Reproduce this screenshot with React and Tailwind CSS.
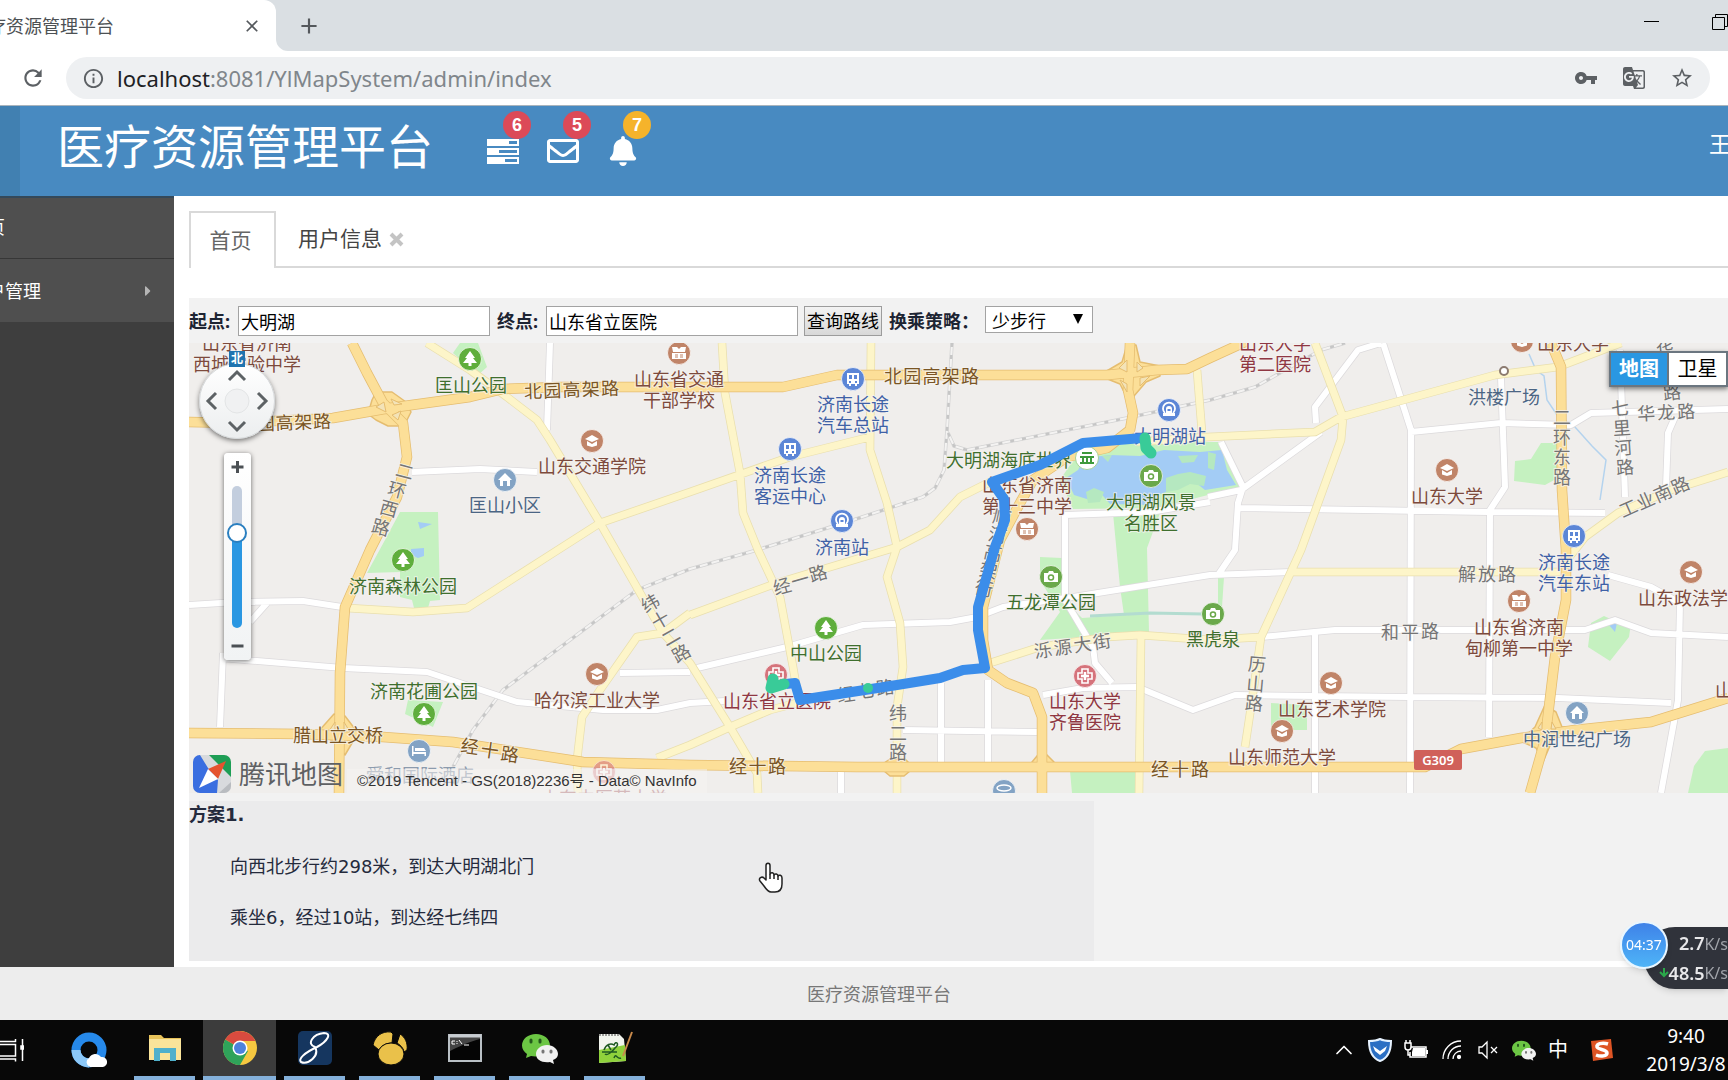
import React from 'react';
import { FaRegEnvelope, FaBell, FaCaretRight } from 'react-icons/fa';
import { MdVpnKey, MdGTranslate, MdStarBorder, MdRefresh, MdInfoOutline, MdClose, MdAdd } from 'react-icons/md';
import { ChevronUp } from 'lucide-react';

const GREENS = [
    '367,573 385,540 400,512 438,512 440,600 430,601 428,608 414,608 412,600 400,597 400,572',
    '460,343 478,343 487,367 478,375 453,353',
    '408,700 443,702 433,727 405,714',
    '1090,450 1137,442 1218,442 1243,488 1208,495 1157,508 1073,509 1060,480 1072,462',
    '1113,513 1160,513 1147,548 1149,632 1100,636 1040,640 1060,612 1040,580 1040,557 1062,558 1064,600 1082,618 1124,615 1120,587',
    '1515,461 1531,459 1541,443 1558,443 1558,478 1545,485 1514,481',
    '1591,623 1604,616 1615,621 1631,623 1629,637 1610,661 1588,647',
    '1271,703 1307,705 1307,730 1271,730',
    '1705,751 1728,748 1728,793 1688,793 1694,766',
    '1070,771 1139,771 1139,793 1072,793',
    '1218,577 1224,577 1222,607 1218,604',
];

const LAKES = [
    '1085,458 1110,455 1140,456 1164,450 1200,452 1222,450 1227,470 1236,485 1205,490 1195,482 1160,494 1150,505 1110,504 1098,490 1090,500 1074,495 1066,478 1078,470',
    '418,522 432,524 420,529',
    '411,549 424,548 424,556 418,558 411,555',
    '1609,625 1617,623 1615,632',
];

const ISLANDS = [
    '1086,492 1094,488 1104,492 1100,502 1088,503',
    '1166,478 1178,474 1190,472 1206,476 1204,486 1190,484 1178,490 1166,492',
    '1178,456 1198,455 1194,462 1182,463',
    '1208,452 1216,454 1214,470 1208,468',
    '1102,456 1112,455 1108,462',
];

const WHITE_ROADS = [
    'M550 343L547 430', 'M412 472L480 469L537 472', 'M189 605L237 602L303 601L342 607', 'M220 658L343 668L427 672L517 702L603 710L657 710L690 703L725 701',
    'M223 653L220 727', 'M267 603L250 622', 'M697 668L787 647L863 625L950 622L977 617L1003 607L1073 597L1210 575L1291 572', 'M620 673L690 672',
    'M941 683V763', 'M988 680V763', 'M903 730L1037 732', 'M1210 502L1150 512L1065 515L1065 600L1093 647L1095 663L1112 683',
    'M1043 695L1083 688L1137 687L1193 710L1235 695L1408 697L1558 698L1671 703', 'M1208 497L1241 490L1321 432', 'M1221 442L1243 487L1238 503L1235 550L1218 575',
    'M1238 508L1488 512L1605 513', 'M1383 343L1411 430L1410 793', 'M1411 432L1501 423L1571 425L1591 413L1728 409', 'M1501 377L1505 487L1490 510L1489 737',
    'M1316 423L1315 407L1358 350L1381 343', 'M1666 487L1668 433L1675 417', 'M1620 350L1625 497', 'M1261 637L1335 630L1585 630L1615 620L1651 633L1728 637',
    'M1608 575L1651 587L1680 603L1678 700L1661 793', 'M1315 632V793', 'M841 770V793',
];

const YELLOW_ROADS = [
    'M427 343L470 370L507 397L537 420L550 440L600 523L663 633L690 663L730 727L757 773L758 793', 'M347 608L413 612L467 608L600 523L690 492L790 457L870 437',
    'M722 343L725 393L740 473L743 513L758 550L780 597L793 667L797 690', 'M871 343L870 450L887 503L897 547L887 577L900 623L903 667L897 707V793',
    'M690 615L777 583L897 547L930 530L960 497L990 482', 'M657 758L690 745L730 727L770 710L797 703', 'M578 793L577 760L582 717L600 690L637 637L663 633L690 613',
    'M990 663L1040 647L1107 637L1140 635L1210 640L1261 637', 'M1141 637L1139 793', 'M1315 343L1343 417L1341 440L1301 550L1261 637L1251 707L1245 747',
    'M1137 442L1208 437L1315 432L1341 417L1495 375L1558 367L1621 343', 'M1197 370L1202 433', 'M1291 572H1560', 'M1570 556L1585 537L1618 513L1671 490L1728 472',
];

const MAIN_ROADS = [
    'M189 422L237 423L333 418L390 408L470 397L503 389L560 387H783L837 375H1107L1157 370L1187 369L1210 358L1245 342',
    'M352 343L367 373L383 403L403 423L407 457L397 497L370 550L345 607L340 673L339 793',
    'M189 733L303 734L383 737L453 742L583 762L690 765L857 767H1425L1461 749L1521 738L1575 730L1651 722L1728 698',
    'M1130 343L1128 390L1133 413L1130 430L1107 448L1067 457L1033 480L1020 503L1000 540L983 607V640L988 670L1007 683L1033 693L1042 717V793',
    'M1551 343L1561 367L1562 490L1566 550V600L1555 657L1545 740L1530 793',
];

const JUNCTIONS = [
    'M368 414L372 400L376 392L392 392L406 402L411 412L404 426L388 426L376 420Z',
    'M1105 372L1122 362L1127 345H1136L1140 362L1160 366V376L1146 382L1134 396H1126L1120 384L1105 378Z',
    'M1520 741L1535 727L1545 705L1556 712L1562 727L1576 727L1560 733L1552 741L1543 762L1536 748Z',
    'M318 732L334 714L345 716L358 733L345 755L334 742Z',
    'M884 763L890 759H905L910 764V771L904 776H890L884 771Z',
    'M1032 762L1042 750L1054 762V770H1032Z',
];

const RAILS = [
    'M952 343L947 430L944 470L935 488L923 497L853 520L757 550L690 569L637 590L503 690L473 730L453 767',
    'M948 433L954 446L967 450L1127 418L1210 400L1255 387L1321 350L1345 343',
];

const tint = {
    green: '#3f6f2e',
    brown: '#7d4a3c',
    road: '#7a5524',
    grey: '#757575',
    blue: '#3f61a6',
    slate: '#4b6584',
    red: '#8f3742',
};

// icon, icon x, icon y, text lines, text x, text y of the first line, colour
const PLACES = [
    ['tree', 470, 359, ['匡山公园'], 471, 385, 'green'],
    ['school', 679, 353, ['山东省交通', '干部学校'], 679, 379, 'brown'],
    ['college', 592, 441, ['山东交通学院'], 592, 466, 'brown'],
    ['house', 505, 480, ['匡山小区'], 505, 505, 'slate'],
    ['tree', 403, 560, ['济南森林公园'], 403, 586, 'green'],
    ['tree', 424, 714, ['济南花圃公园'], 424, 691, 'green'],
    [null, 0, 0, ['腊山立交桥'], 338, 735, 'road'],
    ['college', 597, 674, ['哈尔滨工业大学'], 597, 700, 'brown'],
    [null, 0, 0, ['山东省济南', '西城实验中学'], 247, 343, 'brown'],
    ['bus', 853, 379, ['济南长途', '汽车总站'], 853, 404, 'blue'],
    ['bus', 790, 449, ['济南长途', '客运中心'], 790, 475, 'blue'],
    ['train', 842, 521, ['济南站'], 842, 547, 'blue'],
    ['train', 1169, 410, ['大明湖站'], 1170, 436, 'blue'],
    ['hall', 1087, 458, ['大明湖海底世界'], 1009, 460, 'green'],
    ['school', 1027, 529, ['山东省济南', '第十三中学'], 1027, 485, 'brown'],
    ['camera', 1151, 476, ['大明湖风景', '名胜区'], 1151, 502, 'green'],
    ['camera', 1051, 577, ['五龙潭公园'], 1051, 602, 'green'],
    ['tree', 826, 628, ['中山公园'], 826, 653, 'green'],
    ['hospital', 776, 675, ['山东省立医院'], 777, 701, 'red'],
    ['camera', 1213, 614, ['黑虎泉'], 1213, 639, 'green'],
    ['hospital', 1085, 676, ['山东大学', '齐鲁医院'], 1085, 701, 'red'],
    ['college', 1331, 683, ['山东艺术学院'], 1332, 709, 'brown'],
    ['college', 1282, 731, ['山东师范大学'], 1282, 757, 'brown'],
    ['school', 1519, 601, ['山东省济南', '甸柳第一中学'], 1519, 627, 'brown'],
    ['bus', 1574, 536, ['济南长途', '汽车东站'], 1574, 562, 'blue'],
    ['college', 1691, 572, ['山东政法学院'], 1692, 598, 'brown'],
    ['house', 1577, 713, ['中润世纪广场'], 1577, 739, 'slate'],
    ['dot', 1504, 371, ['洪楼广场'], 1504, 397, 'slate'],
    [null, 0, 0, ['山东大学', '第二医院'], 1275, 343, 'red'],
    ['college', 1522, 341, ['山东大学'], 1573, 343, 'brown'],
    ['college', 1447, 470, ['山东大学'], 1447, 496, 'brown'],
    ['bank', 1004, 791, [], 0, 0, 'slate'],
    [null, 0, 0, ['山'], 1724, 690, 'brown'],
];

// road names follow the road from the first point to the last one
const ROAD_NAMES = [
    ['北园高架路', 533, 391, 610, 388, -2, 'road'],
    ['北园高架路', 247, 424, 322, 421, -2, 'road'],
    ['北园高架路', 893, 376, 970, 376, 0, 'road'],
    ['二环西路', 405, 471, 381, 527, 15, 'grey'],
    ['经十路', 470, 746, 510, 754, 8, 'road'],
    ['经十路', 738, 766, 777, 766, 0, 'road'],
    ['经十路', 1160, 769, 1200, 769, 0, 'road'],
    ['经一路', 782, 586, 818, 573, -16, 'grey'],
    ['纬十二路', 650, 603, 681, 653, -30, 'grey'],
    ['经七路', 846, 694, 885, 687, -8, 'grey'],
    ['纬二路', 898, 713, 898, 752, 0, 'grey'],
    ['顺河高架街', 1002, 517, 984, 588, 12, 'grey'],
    ['泺源大街', 1043, 650, 1102, 641, -8, 'grey'],
    ['历山路', 1257, 664, 1254, 703, 5, 'grey'],
    ['和平路', 1390, 632, 1430, 631, 0, 'grey'],
    ['解放路', 1467, 574, 1507, 574, 0, 'grey'],
    ['二环东路', 1562, 417, 1562, 477, 0, 'grey'],
    ['七里河路', 1620, 408, 1625, 467, -4, 'grey'],
    ['华龙路', 1646, 413, 1686, 411, -3, 'grey'],
    ['华信路', 1665, 350, 1672, 392, -6, 'grey'],
    ['工业南路', 1628, 508, 1680, 485, -24, 'grey'],
];

const iconFill = {
    tree: '#5fae3c', camera: '#6aa84a', school: '#c08468', college: '#c08468', house: '#83a3c4',
    bus: '#5c86d6', train: '#5c86d6', hospital: '#d5737b', hotel: '#83a3c4', bank: '#83a3c4', hall: '#ffffff',
};

const PlaceIcon = ({ kind, x, y }) => {
    if (kind === 'dot') return <circle cx={x} cy={y} r="4" fill="#fff" stroke="#8c7b70" strokeWidth="2" />;
    return (
        <g transform={`translate(${x} ${y})`}>
            <circle r="11.5" fill={iconFill[kind]} stroke={kind === 'hall' ? '#8cc474' : '#fff'} strokeOpacity=".7" />
            {kind === 'tree' && <path d="M0-8L5-1H3L7 4H1.500V7H-1.500V4H-7L-3-1H-5Z" fill="#fff" />}
            {kind === 'camera' && (
                <>
                    <path d="M-7-4H-3L-2-6H2L3-4H7V5H-7Z" fill="#fff" />
                    <circle cy=".5" r="2.500" fill="none" stroke="#6aa84a" strokeWidth="1.500" />
                </>
            )}
            {kind === 'college' && (
                <>
                    <path d="M-7-2L0-6L7-2L0 1Z" fill="#fff" />
                    <path d="M-5 0V4.500L0 6L5 4.500V0L0 3Z" fill="#fff" />
                </>
            )}
            {kind === 'school' && (
                <>
                    <path d="M-7-6H-2L0-4L2-6H7L6-1H-6ZM-7 0H7V6H-7Z" fill="#fff" />
                    <path d="M-4 2H-1M1 2H4M-4 4H-1M1 4H4" stroke="#c08468" />
                </>
            )}
            {kind === 'house' && <path d="M0-7L7 0H5V6H2V1H-2V6H-5V0H-7Z" fill="#fff" />}
            {kind === 'bus' && (
                <>
                    <path d="M-6-6H6V5H4V7H2V5H-2V7H-4V5H-6Z" fill="#fff" />
                    <path d="M-4-4H-1V0H-4ZM1-4H4V0H1ZM-4 2H-2V4H-4ZM2 2H4V4H2Z" fill="#5c86d6" />
                </>
            )}
            {kind === 'train' && (
                <>
                    <path d="M-4 3A6 6 0 1 1 4 3" fill="none" stroke="#fff" strokeWidth="1.800" />
                    <path d="M-3-1A3 3 0 0 1 3-1V3H6V6H-6V3H-3Z" fill="#fff" />
                    <path d="M-1.500-1H1.500V1H-1.500Z" fill="#5c86d6" />
                </>
            )}
            {kind === 'hospital' && (
                <>
                    <path d="M-3-7H3V-3H7V3H3V7H-3V3H-7V-3H-3Z" fill="none" stroke="#fff" strokeWidth="1.600" />
                    <path d="M0-4V4M-4 0H4" stroke="#fff" strokeWidth="2.400" />
                </>
            )}
            {kind === 'hotel' && <path d="M-7-5H-5.500V1H7V5H5.500V3H-5.500V5H-7ZM-4-3H5L7 0H-4Z" fill="#fff" />}
            {kind === 'bank' && <ellipse cy="-3" rx="7" ry="3" fill="none" stroke="#fff" strokeWidth="1.500" />}
            {kind === 'hall' && <path d="M-5-6H5V-4H-5ZM-7-2H7V0H-7ZM-5 0H-3V5H-5ZM-1 0H1V5H-1ZM3 0H5V5H3ZM-7 4H7V6H-7Z" fill="#3f9a3c" />}
        </g>
    );
};

const Label = ({ x, y, color, angle = 0, children }) => (
    <text
        x={x}
        y={y}
        transform={angle ? `rotate(${angle} ${x} ${y})` : undefined}
        textAnchor="middle"
        dominantBaseline="central"
        fontSize="18"
        fill={tint[color]}
        stroke="#f5f3f0"
        strokeWidth="2"
        strokeOpacity=".75"
        paintOrder="stroke"
    >
        {children}
    </text>
);

const Roads = ({ paths, edge, fill, width }) => (
    <g fill="none" strokeLinejoin="round">
        <path d={paths.join('')} stroke={edge} strokeWidth={width + 1.5} />
        <path d={paths.join('')} stroke={fill} strokeWidth={width} />
    </g>
);

const MapCanvas = () => (
    <svg className="block w-full h-[450px]" viewBox="189 343 1539 450" preserveAspectRatio="xMinYMin slice">
        <rect x="189" y="343" width="1539" height="450" fill="#f0eeec" />
        {GREENS.map((points) => <polygon key={points} points={points} fill="#c5f1c0" />)}
        {LAKES.map((points) => <polygon key={points} points={points} fill="#a3ccf5" />)}
        {ISLANDS.map((points) => <polygon key={points} points={points} fill="#b5e8c0" />)}
        <path d="M1529 354L1536 370L1544 376L1547 400L1557 415L1575 427L1592 446L1606 460L1600 500" fill="none" stroke="#b4d3ee" strokeWidth="1.500" />
        <path d="M1090 616L1150 613L1203 614" fill="none" stroke="#b3dcd0" strokeWidth="3" />
        <path d={RAILS.join('')} fill="none" stroke="#d3d3d3" strokeWidth="3.500" />
        <path d={RAILS.join('')} fill="none" stroke="#f4f3f2" strokeWidth="2" />
        <path d={RAILS.join('')} fill="none" stroke="#c6c6c6" strokeWidth="2.500" strokeDasharray="4 8" />
        <Roads paths={WHITE_ROADS} edge="#dcdadc" fill="#ffffff" width={6} />
        <Roads paths={YELLOW_ROADS} edge="#e9dfae" fill="#fdf5c9" width={7} />
        <path d={JUNCTIONS.join('')} fill="#fcdf98" stroke="#e5bd70" strokeWidth="1.500" strokeLinejoin="round" />
        <Roads paths={MAIN_ROADS} edge="#e5bd70" fill="#fcdf98" width={9} />
        <path d="M376 407L384 402L386 412ZM391 399L402 404L394 405ZM392 415L401 411L398 420ZM1119 368L1127 360V372ZM1137 362L1143 368L1137 372ZM1120 380L1127 384V392ZM1140 378L1150 376L1140 386ZM1538 728L1542 722V730ZM1552 722L1556 729L1551 729ZM329 731L335 722V731ZM344 722L350 732H344Z" fill="#f3e3b8" stroke="#e5bd70" />

        {PLACES.map(([icon, ix, iy, lines, x, y, color]) => (
            <g key={`${x}-${y}-${ix}`}>
                {icon && <PlaceIcon kind={icon} x={ix} y={iy} />}
                {lines.map((line, i) => <Label key={line} x={x} y={y + i * 21} color={color}>{line}</Label>)}
            </g>
        ))}
        {ROAD_NAMES.map(([name, x1, y1, x2, y2, angle, color]) => [...name].map((char, i, all) => {
            const t = i / (all.length - 1);
            return <Label key={`${x1}-${y1}-${i}`} x={x1 + (x2 - x1) * t} y={y1 + (y2 - y1) * t} angle={angle} color={color}>{char}</Label>;
        }))}
        <PlaceIcon kind="hotel" x={419} y={751} />
        <g opacity=".6">
            <Label x={420} y={775} color="slate">舜和国际酒店</Label>
            <PlaceIcon kind="hospital" x={604} y={772} />
            <Label x={604} y={798} color="red">山东中医药大学</Label>
        </g>
        <rect x="1414" y="750" width="48" height="20" rx="2" fill="#d0615a" />
        <text x="1438" y="760" textAnchor="middle" dominantBaseline="central" fontSize="13" fontWeight="600" fill="#fff">G309</text>

        <path d="M1142 438L1083 443L1040 465L992 482L1004 499L1005 520L995 547L978 607V630L985 668L963 670L940 678L897 685L800 700L795 683L786 684" fill="none" stroke="#3b8dea" strokeWidth="10" strokeLinejoin="round" />
        <path d="M1145 438L1146 448L1151 453M784 684L771 688L773 679" fill="none" stroke="#39cb98" strokeWidth="11" strokeLinecap="round" strokeLinejoin="round" />
        <circle cx="868" cy="688" r="5" fill="#39cb98" />
    </svg>
);

const MapControls = () => (
    <>
        <div className="absolute left-2.5 top-2 flex flex-col items-center w-[76px]">
            <span className="z-10 w-4 h-4 bg-[#1f74b0] text-white text-xs leading-4 text-center font-bold">北</span>
            <button aria-label="平移" className="-mt-1 w-[76px] h-[76px] rounded-full border border-[#d5d8da] bg-linear-to-b from-white to-[#eceeef] shadow-[0_2px_5px_#00000080]">
                <svg viewBox="-37 -37 74 74" fill="none" stroke="#5d6265" strokeWidth="3">
                    <circle r="12" fill="#f0f1f2" stroke="#e3e5e6" strokeWidth="1" />
                    <path d="M-8-21L0-29L8-21M-8 21L0 29L8 21M-21-8L-29 0L-21 8M21-8L29 0L21 8" />
                </svg>
            </button>
            <div className="mt-3.5 w-[27px] h-[207px] rounded-sm bg-linear-to-b from-white to-[#f1f3f4] shadow-[0_1px_5px_#00000090] flex flex-col items-center justify-between text-[#4b5054]">
                <button aria-label="放大" className="w-full h-7">
                    <svg viewBox="0 0 27 28" stroke="currentColor" strokeWidth="3"><path d="M7.500 14H19.500M13.500 8V20" /></svg>
                </button>
                <input
                    type="range"
                    aria-label="缩放级别"
                    defaultValue={69}
                    className="appearance-none w-2.5 h-[142px] rounded-full [writing-mode:vertical-lr] [direction:rtl] bg-[linear-gradient(to_bottom,#c3cede_34%,#2a97e2_34%)] [&::-webkit-slider-thumb]:appearance-none [&::-webkit-slider-thumb]:w-5 [&::-webkit-slider-thumb]:h-5 [&::-webkit-slider-thumb]:rounded-full [&::-webkit-slider-thumb]:border-2 [&::-webkit-slider-thumb]:border-solid [&::-webkit-slider-thumb]:border-[#2a7fc0] [&::-webkit-slider-thumb]:bg-white"
                />
                <button aria-label="缩小" className="w-full h-7">
                    <svg viewBox="0 0 27 28" stroke="currentColor" strokeWidth="3"><path d="M7.500 14H19.500" /></svg>
                </button>
            </div>
        </div>

        <div className="absolute right-0 top-2 flex h-9 border-2 border-[#6b7680] bg-white text-xl shadow-[0_2px_5px_#00000080]">
            <button className="w-[58px] bg-[#2a97e2] text-white font-bold border-r-2 border-[#6b7680]">地图</button>
            <button className="w-[57px] text-black">卫星</button>
        </div>

        <div className="absolute left-1 bottom-0 flex items-end">
            <div className="flex items-center gap-2 text-[#5e6063]">
                <svg width="38" height="38" viewBox="0 0 38 38">
                    <rect width="38" height="38" rx="7" fill="#d8dadd" />
                    <path d="M16 0H31A7 7 0 0 1 38 7V22Z" fill="#1e9e55" />
                    <path d="M7 0A7 7 0 0 0 0 7V31A7 7 0 0 0 7 38H24L25 25L15 13Z" fill="#3a6ee0" />
                    <path d="M26 38L38 27V31A7 7 0 0 1 31 38Z" fill="#b9bcc0" />
                    <path d="M33 6L15 14L25 24Z" fill="#e4532f" />
                    <path d="M6 33L15 14L25 24Z" fill="#fff" />
                </svg>
                <span className="text-[26px] leading-[38px]">腾讯地图</span>
            </div>
            <p className="ml-1 px-2.5 h-6 leading-6 bg-[#f5f4f2]/50 text-[15px] text-[#333] font-['Liberation_Sans','Noto_Sans_CJK_SC',sans-serif] whitespace-nowrap">
                ©2019 Tencent - GS(2018)2236号 - Data© NavInfo
            </p>
        </div>
    </>
);

const BrowserChrome = () => (
    <header className="font-['Noto_Sans','Noto_Sans_CJK_SC',sans-serif]">
        <div className="flex items-center h-[51px] bg-[#dadfe3] text-[#54585c]">
            <div className="relative flex items-center justify-between w-[276px] h-full pr-3.5 bg-white rounded-tr-xl">
                <span className="-ml-[30px] text-lg text-[#4d5154] whitespace-nowrap">医疗资源管理平台</span>
                <button aria-label="关闭标签页"><MdClose className="w-5 h-5" /></button>
                <svg className="absolute left-full bottom-0 w-3 h-3 text-white" viewBox="0 0 12 12" fill="currentColor"><path d="M0 0A12 12 0 0 0 12 12H0Z" /></svg>
            </div>
            <button aria-label="新建标签页" className="ml-5"><MdAdd className="w-[26px] h-[26px]" stroke="currentColor" /></button>
            <div className="ml-auto -mr-1 flex items-center gap-[52px] text-black">
                <button aria-label="最小化"><svg className="w-4 h-4" viewBox="0 0 16 16" stroke="currentColor"><path d="M0 3.500H15" /></svg></button>
                <button aria-label="还原" className="mb-2">
                    <svg className="w-5 h-4" viewBox="0 0 20 16" fill="none" stroke="currentColor"><path d="M.5 3.500H12.500V15.500H.5ZM3.500 3.500V.5H15.500V12.500H12.500" /></svg>
                </button>
            </div>
        </div>
        <div className="flex items-center h-[55px] pl-5 pr-[18px] gap-5 bg-white border-b border-[#a9b4bd] text-[#5c6064]">
            <button aria-label="重新加载"><MdRefresh className="w-[26px] h-[26px]" /></button>
            <div className="flex flex-1 items-center h-[42px] px-4 rounded-full bg-[#eef0f2]">
                <MdInfoOutline className="w-[23px] h-[23px] mr-3" />
                <span role="textbox" aria-label="地址" className="text-[22px] leading-7 text-[#80868b]">
                    <span className="text-[#202124]">localhost</span>:8081/YlMapSystem/admin/index
                </span>
                <div className="ml-auto flex items-center gap-6">
                    <button aria-label="密码"><MdVpnKey className="w-6 h-6" /></button>
                    <button aria-label="翻译"><MdGTranslate className="w-6 h-6" /></button>
                    <button aria-label="收藏"><MdStarBorder className="w-6 h-6" /></button>
                </div>
            </div>
        </div>
    </header>
);

const NoticeButton = ({ label, count, badge, children }) => (
    <button aria-label={label} className="relative w-8 h-8 flex items-center justify-center">
        {children}
        <span className={`absolute left-4 -top-6 w-7 h-7 rounded-full text-center text-lg leading-7 font-bold font-['Liberation_Sans',sans-serif] ${badge}`}>{count}</span>
    </button>
);

const AppHeader = () => (
    <div className="flex items-center h-[90px] bg-[#488ac1] text-white">
        <div className="w-5 h-full bg-[#4180b1]" />
        <h1 className="ml-[37px] mb-2.5 text-[47px] leading-[60px] whitespace-nowrap">医疗资源管理平台</h1>
        <div className="ml-[54px] flex gap-7">
            <NoticeButton label="任务" count="6" badge="bg-[#dc4a58]">
                <svg className="w-8 h-8" viewBox="0 0 32 32" fill="currentColor">
                    <path d="M0 4H32V11H0ZM0 13H32V20H0ZM0 22H32V29H0Z" />
                    <path d="M22 6H30V9H22ZM12 15H30V18H12ZM18 24H30V27H18Z" fill="#488ac1" />
                </svg>
            </NoticeButton>
            <NoticeButton label="邮件" count="5" badge="bg-[#dc4a58]"><FaRegEnvelope className="w-8 h-8" /></NoticeButton>
            <NoticeButton label="提醒" count="7" badge="bg-[#f5b32b]"><FaBell className="w-[30px] h-[30px]" /></NoticeButton>
        </div>
        <a href="#user" className="ml-auto -mr-[3px] mb-4 w-[22px] overflow-hidden text-[22px] leading-8">王</a>
    </div>
);

const Sidebar = () => (
    <nav className="w-[174px] shrink-0 bg-[#3e3e3e] text-white text-lg overflow-hidden">
        <a href="#home" className="flex items-center h-[63px] pb-0.5 border-t-2 border-b border-t-[#34495a] border-b-[#373737] bg-[#4f4f4f] whitespace-nowrap">
            <span className="-ml-[31px]">首页</span>
        </a>
        <a href="#users" className="flex items-center h-[63px] bg-[#4f4f4f] whitespace-nowrap">
            <span className="-ml-[31px]">用户管理</span>
            <FaCaretRight className="ml-auto mr-[18px] w-4 h-4 text-[#b5b5b5]" />
        </a>
    </nav>
);

const RouteForm = () => (
    <form className="flex items-center h-[45px] text-lg text-[#1d2433]" onSubmit={(e) => e.preventDefault()}>
        <label htmlFor="start" className="w-[49px] font-bold">起点:</label>
        <input id="start" defaultValue="大明湖" className="w-[252px] h-[30px] px-0.5 border border-[#a3a3a3] bg-white text-black" />
        <label htmlFor="end" className="w-14 pl-[7px] font-bold">终点:</label>
        <input id="end" defaultValue="山东省立医院" className="w-[252px] h-[30px] px-0.5 border border-[#a3a3a3] bg-white text-black" />
        <button className="ml-1.5 w-[78px] h-[30px] border border-[#9c9c9c] bg-linear-to-b from-[#f3f3f3] to-[#d8d8d8] text-black whitespace-nowrap">查询路线</button>
        <label htmlFor="policy" className="w-[103px] pl-[7px] font-bold whitespace-nowrap">换乘策略：</label>
        <span className="relative mb-[3px]">
            <select id="policy" className="appearance-none block w-[108px] h-[27px] pl-1.5 pt-0.5 border border-[#a3a3a3] bg-white text-black leading-6">
                <option>少步行</option>
            </select>
            <svg className="absolute right-2.5 top-2 w-2.5 h-2.5 pointer-events-none" viewBox="0 0 10 10"><path d="M0 0H10L5 10Z" /></svg>
        </span>
    </form>
);

const Content = () => (
    <main className="relative flex flex-1 min-w-0 flex-col pl-[15px] pb-1.5 bg-white">
        <div role="tablist" className="mt-[15px] flex h-[57px] text-[21px] border-b-2 border-[#d9d9d9]">
            <button role="tab" aria-selected="true" className="-mb-0.5 w-[87px] pr-1 border-2 border-b-0 border-[#d9d9d9] bg-white text-[#666]">首页</button>
            <button role="tab" aria-selected="false" className="ml-[22px] flex items-center gap-1 text-[#444]">
                用户信息
                <svg className="w-5 h-5 text-[#c4c4c4]" viewBox="0 0 20 20" stroke="currentColor" strokeWidth="4"><path d="M5 5L16 16M16 5L5 16" /></svg>
            </button>
        </div>
        <section className="mt-[30px] flex flex-1 min-h-0 flex-col bg-[#f2f2f2]">
            <RouteForm />
            <div className="relative overflow-hidden">
                <MapCanvas />
                <MapControls />
            </div>
            <div className="mt-2 flex-1 w-full max-w-[905px] bg-[#ebebec] text-lg text-[#242a3c] font-['DejaVu_Sans','Noto_Sans_CJK_SC',sans-serif] overflow-hidden">
                <h2 className="leading-7 font-bold">方案1.</h2>
                <ul className="mt-3 pl-[41px] leading-[51px]">
                    <li>向西北步行约298米，到达大明湖北门</li>
                    <li>乘坐6，经过10站，到达经七纬四</li>
                </ul>
            </div>
        </section>
        <svg className="absolute left-[584px] bottom-[73px] w-[26px] h-8" viewBox="0 0 26 32" fill="#fff" stroke="#222" strokeWidth="1.500" strokeLinejoin="round">
            <path d="M8 18V3.500C8 .5 12 .5 12 3.500V12C13 10 16 10.500 16 13C17 11 20 12 20 14C21 12.500 24 13 24 16V22C24 27 22 30 17 30H13C10 30 8 27 6 24L2 19C0 16 4 14 6 16Z" />
            <path d="M12 12V17M16 13V17M20 14V18" fill="none" />
        </svg>
    </main>
);

const SpeedWidget = () => (
    <div className="fixed right-0 bottom-[85px] flex items-center font-['Noto_Sans',sans-serif]">
        <div className="z-10 -mr-6 mb-[26px] w-12 h-12 rounded-full border-2 border-[#e8f6ff] bg-linear-to-b from-[#3f82e8] to-[#4fb4f7] text-sm leading-11 text-center text-white shadow-md">04:37</div>
        <div className="flex flex-col justify-between w-[84px] h-[62px] py-0.5 rounded-l-full bg-[#30333b] text-right text-base leading-7 text-[#a1a4aa] shadow-md whitespace-nowrap">
            <p><b className="text-lg font-semibold text-[#e8e8ea]">2.7</b>K/s</p>
            <p className="flex items-center justify-end">
                <svg className="w-2.5 h-2.5" viewBox="0 0 10 10" fill="none" stroke="#2ba84a" strokeWidth="2"><path d="M5 0V8M1 4L5 8L9 4" /></svg>
                <b className="text-lg font-semibold text-[#e8e8ea]">48.5</b>K/s
            </p>
        </div>
    </div>
);

const WeChat = ({ className }) => (
    <svg className={className} viewBox="0 0 36 36">
        <path d="M14 4C6 4 0 9 0 15.500C0 19 2 22 5 24L4 28L9 26C18 28 28 23 28 15.500C28 9 22 4 14 4Z" fill="#6cc644" />
        <path d="M25 15C19 15 14 19 14 24C14 30 20 33 28 32L32 34L31 30C34 29 36 27 36 24C36 19 31 15 25 15Z" fill="#f1f1f1" />
        <path d="M9 10V12M18 10V12" stroke="#24591c" strokeWidth="3" strokeLinecap="round" />
        <path d="M21 21V22M29 21V22" stroke="#777" strokeWidth="3" strokeLinecap="round" />
    </svg>
);

const taskApps = [
    { name: '文件资源管理器', icon: (
        <svg className="w-8 h-9" viewBox="0 0 32 36">
            <path d="M0 5H12L15 8H32V30H0Z" fill="#e8c35a" />
            <path d="M0 9H32V30H0Z" fill="#fae49a" />
            <path d="M5 18H27V31H21V23H11V31H5Z" fill="#4fb0cc" />
        </svg>
    ) },
    { name: 'Chrome', active: true, icon: (
        <svg className="w-[34px] h-[34px]" viewBox="-17 -17 34 34">
            <circle r="17" fill="#f6c840" />
            <path d="M0 0L-14.700-8.500A17 17 0 0 0 0 17L8 3Z" fill="#2fa35a" />
            <path d="M0 0L-14.700-8.500A17 17 0 0 1 15.400-7H0Z" fill="#d94b3f" />
            <circle r="7.500" fill="#fff" />
            <circle r="6" fill="#4d82dc" />
        </svg>
    ) },
    { name: '数据库工具', icon: (
        <svg className="w-[34px] h-[34px]" viewBox="0 0 34 34">
            <rect width="34" height="34" rx="5" fill="#15365f" />
            <path d="M17 16C8 13 15 3 26 2C34 2 30 10 19 16C6 22 0 28 3 31C10 34 22 25 17 16Z" fill="none" stroke="#fff" strokeWidth="2" />
        </svg>
    ) },
    { name: 'Navicat', icon: (
        <svg className="w-9 h-9" viewBox="0 0 36 36" fill="#eac14a" stroke="#080808">
            <path d="M1 15C3 6 10 1 19 2L21 4L20 13C14 13 9 16 7 20ZM28 4C33 7 36 13 35 20L32 22C31 17 28 15 25 13Z" />
            <ellipse cx="19" cy="24" rx="13" ry="11" />
        </svg>
    ) },
    { name: '命令提示符', icon: (
        <svg className="w-[34px] h-7" viewBox="0 0 34 28">
            <rect x="1" y="1" width="32" height="26" fill="#050505" stroke="#b9c0c5" strokeWidth="2" />
            <path d="M2 3H32V5C20 8 8 14 2 17Z" fill="#444" />
            <path d="M1 2H33" stroke="#c8cdd1" strokeWidth="3" />
            <path d="M7 7H4V10H7M9 7V8M9 9V10M11 6L14 10M16 11H21" stroke="#fff" fill="none" />
        </svg>
    ) },
    { name: '微信', icon: <WeChat className="w-9 h-9" /> },
    { name: 'Notepad++', icon: (
        <svg className="w-9 h-9" viewBox="0 0 36 36">
            <path d="M2 4H22L27 9L29 31L2 33Z" fill="#f2f5ee" />
            <path d="M2 20L28 15L29 31L2 33Z" fill="#8fd23c" />
            <path d="M3 4V6M6 4V6M9 4V6M12 4V6M15 4V6M18 4V6M21 4V6" stroke="#444" />
            <path d="M7 20C9 14 14 13 17 15C19 10 23 14 18 18C15 22 10 26 8 24M5 22H20M11 15L14 20M17 28C19 22 20 30 24 28" fill="none" stroke="#1f5a22" strokeWidth="1.500" />
            <path d="M35 2L26 26" stroke="#c98a4b" strokeWidth="2" />
        </svg>
    ) },
];

const Taskbar = () => (
    <footer className="flex h-[60px] bg-[#080808] text-white font-['Noto_Sans','Noto_Sans_CJK_SC',sans-serif]">
        <button aria-label="任务视图" className="w-6 flex items-center">
            <svg className="w-6 h-6" viewBox="0 0 24 24" fill="none" stroke="currentColor" strokeWidth="1.500">
                <path d="M0 6.500H15.500V18H0M0 3.500H15.500V1M0 21H15.500V23.500M22.500 1V23" /><path d="M21 8H24V11H21Z" fill="currentColor" />
            </svg>
        </button>
        <button aria-label="QQ浏览器" className="ml-[47px] mr-[27px] flex items-center">
            <svg className="w-9 h-9" viewBox="0 0 36 36">
                <circle cx="18" cy="18" r="13" fill="none" stroke="#2689ea" strokeWidth="9" />
                <path d="M5 18A13 13 0 0 0 18 31" fill="none" stroke="#8cc8f8" strokeWidth="9" />
                <path d="M19 35A5 5 0 0 1 18 26A7 7 0 0 1 30 25A5 5 0 0 1 32 35Z" fill="#fff" />
            </svg>
        </button>
        <div className="flex gap-3.5">
            {taskApps.map(({ name, icon, active }) => (
                <button
                    key={name}
                    aria-label={name}
                    className={active
                        ? '-mx-1.5 w-[73px] flex items-center justify-center bg-[#3c3c3c] border-b-4 border-[#84b0da]'
                        : 'w-[61px] flex items-center justify-center border-b-4 border-[#84b0da]'}
                >
                    {icon}
                </button>
            ))}
        </div>
        <div className="ml-auto flex items-center">
            <button aria-label="显示隐藏的图标" className="w-9 flex justify-center"><ChevronUp className="w-7 h-7" strokeWidth={1.5} /></button>
            <span className="w-9 flex justify-center">
                <svg className="w-6 h-6" viewBox="0 0 24 24">
                    <path d="M12 1C16 3 20 3 23 3C23 13 20 20 12 23C4 20 1 13 1 3C4 3 8 3 12 1Z" fill="#2b6fc4" stroke="#e6f2ff" strokeWidth="2" />
                    <path d="M5 8L12 13L19 8L17 13L12 17L7 13Z" fill="#fff" />
                </svg>
            </span>
            <span className="w-9 flex justify-center">
                <svg className="w-6 h-5" viewBox="0 0 24 20" fill="none" stroke="currentColor" strokeWidth="1.500">
                    <path d="M7 7H22V17H6V12M1 3H7V7A3 3 0 0 1 1 7ZM2 0V3M6 0V3M4 10V15H6M23.500 10V14" /><path d="M9 8H21V16H8V12Z" fill="currentColor" stroke="none" />
                </svg>
            </span>
            <span className="w-9 flex justify-center">
                <svg className="w-5 h-5" viewBox="0 0 20 20" fill="none" stroke="currentColor" strokeWidth="1.300">
                    <path d="M1 19A18 18 0 0 1 19 1M6 19A13 13 0 0 1 19 6M11 19A8 8 0 0 1 19 11" /><circle cx="17" cy="17" r="1.500" fill="currentColor" />
                </svg>
            </span>
            <span className="w-9 flex justify-center">
                <svg className="w-5 h-5" viewBox="0 0 20 20" fill="none" stroke="currentColor" strokeWidth="1.300"><path d="M1 7H4L9 2V18L4 13H1ZM13 7L19 13M19 7L13 13" /></svg>
            </span>
            <span className="w-9 flex justify-center"><WeChat className="w-6 h-6" /></span>
            <span className="w-9 pr-1 text-center text-xl">中</span>
            <span className="w-9 ml-1.5 flex justify-center">
                <svg className="w-6 h-6" viewBox="0 0 24 24">
                    <path d="M1 3L21 1L23 20L3 23Z" fill="#de5424" />
                    <path d="M18 6C12 4 6 6 7 9C8 12 17 11 17 15C17 18 11 19 6 17" fill="none" stroke="#fff" strokeWidth="3.500" />
                </svg>
            </span>
            <time className="ml-6 w-[84px] text-center text-[19px] leading-7">9:40<br />2019/3/8</time>
        </div>
    </footer>
);

export default function App() {
    return (
        <div className="flex h-screen flex-col overflow-hidden bg-white font-['Noto_Sans','Noto_Sans_CJK_SC',sans-serif]">
            <BrowserChrome />
            <AppHeader />
            <div className="flex flex-1 min-h-0">
                <Sidebar />
                <Content />
            </div>
            <div className="flex h-[53px] items-center justify-center bg-[#ededed] pl-[30px] text-lg text-[#777]">医疗资源管理平台</div>
            <Taskbar />
            <SpeedWidget />
        </div>
    );
}
